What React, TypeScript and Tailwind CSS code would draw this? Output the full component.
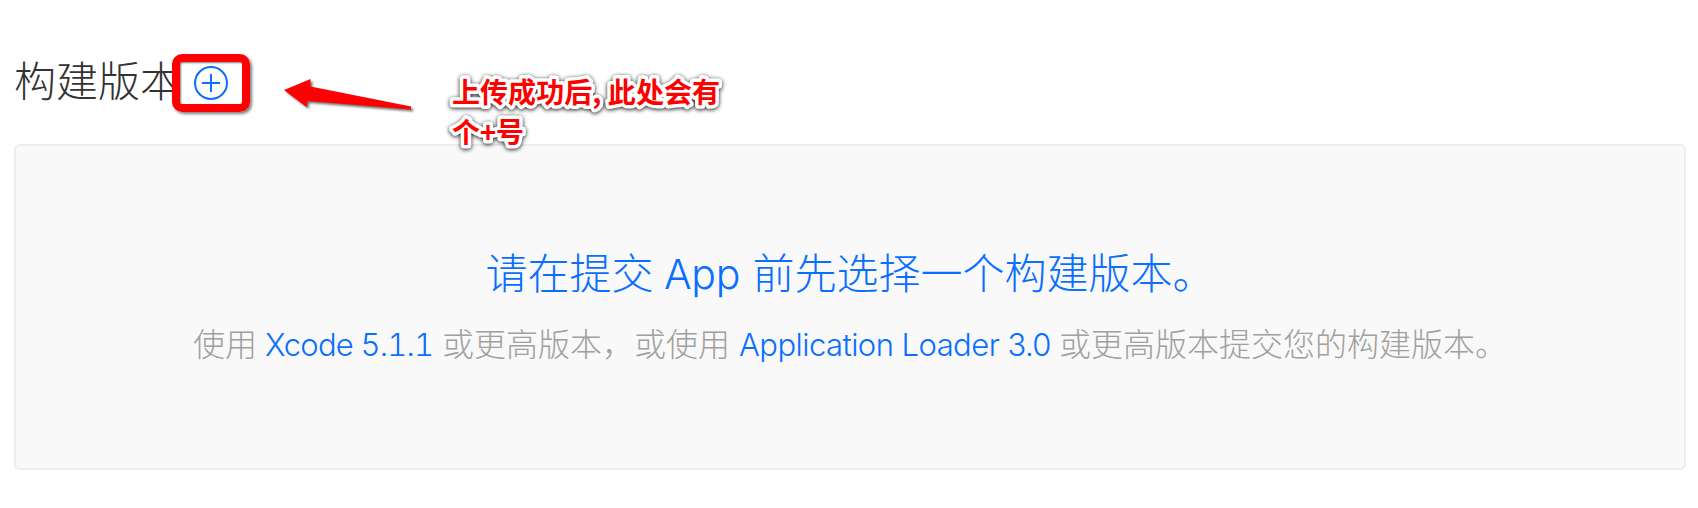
import React from "react";

const cjk = "font-['Noto_Sans_CJK_SC',sans-serif]";
const latin = "font-['Inter','Noto_Sans_CJK_SC',sans-serif]";

function AddIcon() {
  return (
    <svg className="h-[34px] w-[34px]" viewBox="0 0 34 34" fill="none" stroke="#0a6eff" strokeWidth="2">
      <circle cx="17" cy="17" r="16" />
      <path d="M8 17H26M17 8V26" />
    </svg>
  );
}

function Arrow() {
  return (
    <svg
      className="absolute left-[270px] top-[70px] h-[50px] w-[150px] drop-shadow-[2px_2px_1px_rgba(0,0,0,0.55)]"
      viewBox="0 0 150 50"
    >
      <path d="M14 20L40.500 9V16.500L141 36.500V39.500L37.500 31L36.500 37Z" fill="#f00" />
    </svg>
  );
}

const noteLines = ["上传成功后, 此处会有", "个+号"];

function Note() {
  return (
    <svg className="absolute left-[430px] top-[61px] h-[100px] w-[310px]" viewBox="0 0 310 100">
      <g
        className="font-['Noto_Sans_CJK_SC',sans-serif] text-[28px] font-bold drop-shadow-[0_1px_2px_rgba(0,0,0,0.9)]"
        fill="#fff"
        stroke="#fff"
        strokeWidth="7"
        strokeLinejoin="round"
      >
        {noteLines.map((t, i) => (
          <text key={t} x="22" y={42 + i * 40} textLength={i === 0 ? 268 : 72}>{t}</text>
        ))}
      </g>
      <g className="font-['Noto_Sans_CJK_SC',sans-serif] text-[28px] font-bold" fill="#f00" aria-hidden="true">
        {noteLines.map((t, i) => (
          <text key={t} x="22" y={42 + i * 40} textLength={i === 0 ? 268 : 72}>{t}</text>
        ))}
      </g>
    </svg>
  );
}

export default function App() {
  return (
    <main className={`relative h-[508px] w-[1698px] overflow-hidden bg-white pl-[14px] pt-[49px] font-light ${cjk}`}>
      <header className="flex h-[60px] items-start">
        <h1 className="w-[180px] whitespace-nowrap text-[42px] leading-[60px] text-[#333]">构建版本</h1>
        <div className="pt-[17px]">
          <AddIcon />
        </div>
      </header>
      <section className="mt-[35px] flex h-[326px] w-[1672px] flex-col items-center whitespace-nowrap rounded-md border-2 border-[#ededed] bg-[#f9f9f9] pt-[95px]">
        <h2 className="flex h-[60px] items-baseline text-[42px] leading-[60px] text-[#0a6eff]">
          <span>请在提交</span>
          <span className={`w-[99px] pr-0.5 text-center text-[41px] tracking-[-0.3px] ${latin}`}>App</span>
          <span>前先选择一个构建版本。</span>
        </h2>
        <p className="mt-[18px] flex h-[46px] items-baseline text-[32px] leading-[46px] text-[#a0a0a0]">
          <span>使用</span>
          <a className={`w-[185px] pl-2 text-[31px] tracking-[-0.8px] tabular-nums text-[#0a6eff] ${latin}`}>Xcode 5.1.1</a>
          <span>或更高版本，或使用</span>
          <a className={`w-[329px] pl-[9px] text-[31px] tracking-[-0.55px] text-[#0a6eff] ${latin}`}>Application Loader 3.0</a>
          <span>或更高版本提交您的构建版本。</span>
        </p>
      </section>
      <div className="absolute left-[172px] top-[54px] h-[58px] w-[78px] rounded-[10px] border-8 border-[#f00] shadow-[2px_2px_3px_rgba(0,0,0,0.5),inset_1px_1px_2px_rgba(0,0,0,0.5)]" />
      <Arrow />
      <Note />
    </main>
  );
}
